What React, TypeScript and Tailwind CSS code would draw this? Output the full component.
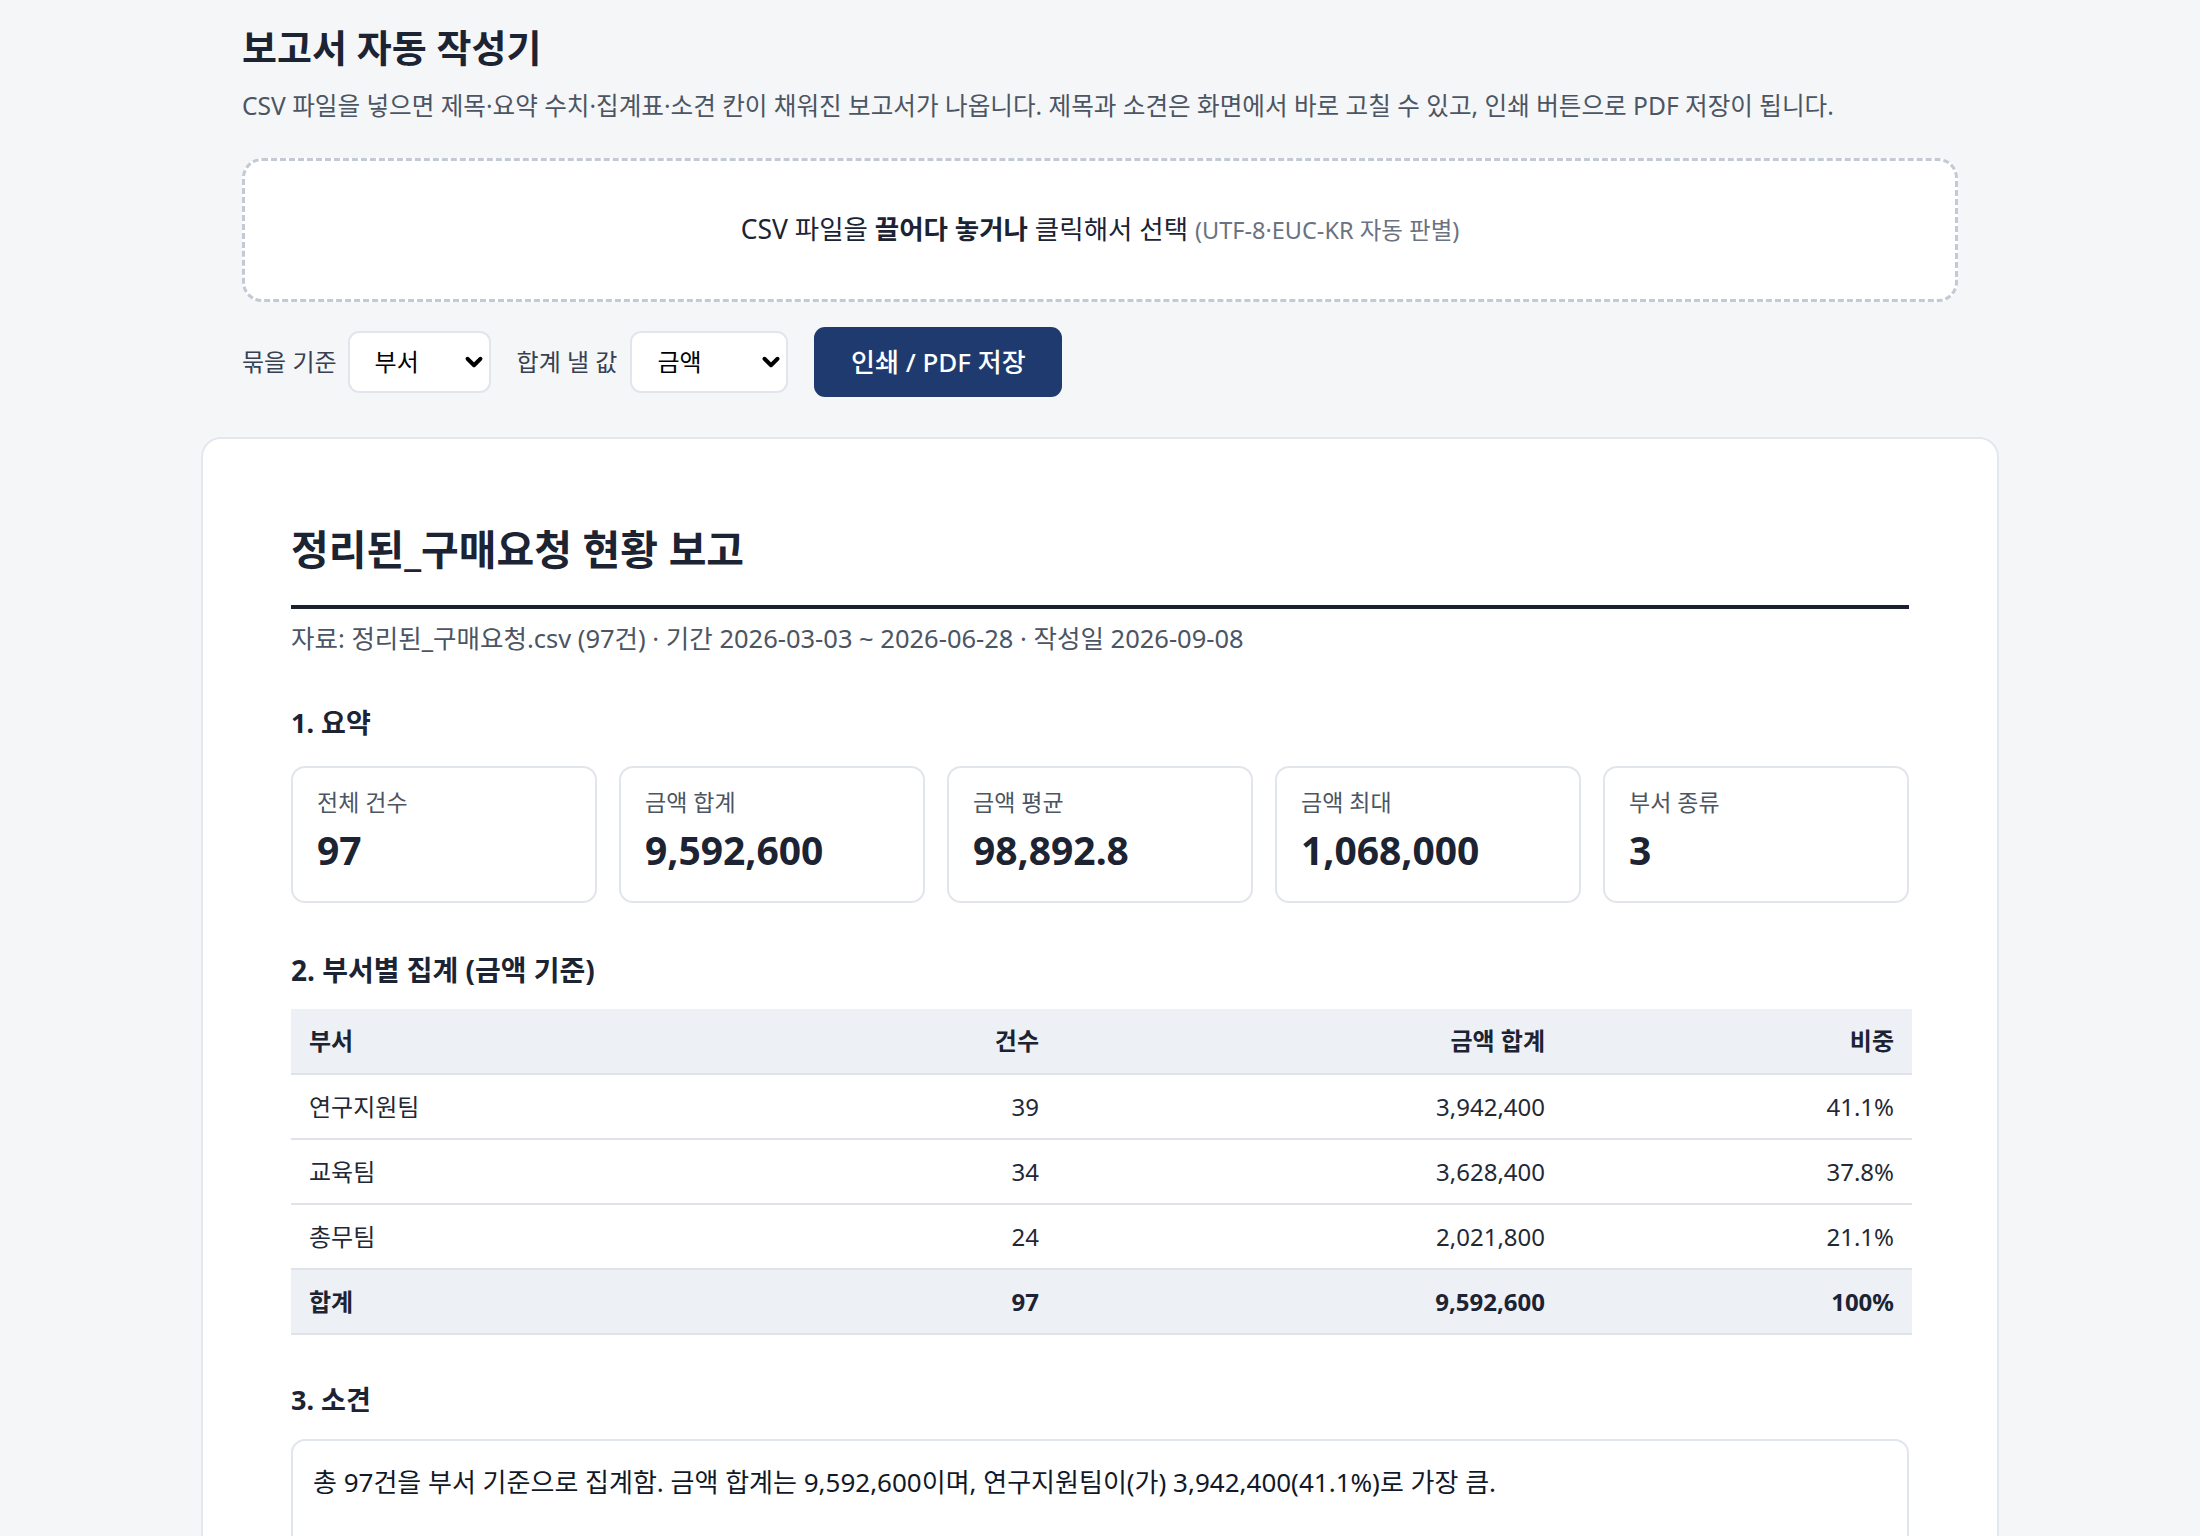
import { ChevronDown } from "lucide-react";

const rows = [
  { name: "연구지원팀", count: "39", sum: "3,942,400", share: "41.1%" },
  { name: "교육팀", count: "34", sum: "3,628,400", share: "37.8%" },
  { name: "총무팀", count: "24", sum: "2,021,800", share: "21.1%" },
];

const stats = [
  { label: "전체 건수", value: "97" },
  { label: "금액 합계", value: "9,592,600" },
  { label: "금액 평균", value: "98,892.8" },
  { label: "금액 최대", value: "1,068,000" },
  { label: "부서 종류", value: "3" },
];

function Select({ value, width }: { value: string; width: string }) {
  return (
    <div className={`relative ${width}`}>
      <select
        defaultValue={value}
        className="h-[62px] w-full appearance-none rounded-[11px] border-2 border-[#e1e5ec] bg-white pl-[25px] text-[24px] text-black outline-none"
      >
        <option>{value}</option>
      </select>
      <ChevronDown
        size={26}
        strokeWidth={3.6}
        className="pointer-events-none absolute right-[4px] top-1/2 -translate-y-1/2 text-black"
      />
    </div>
  );
}

export default function App() {
  return (
    <div className="min-h-screen bg-[#f5f6f8] font-['Noto_Sans','Noto_Sans_CJK_KR',sans-serif] text-[#1c2333]">
      <div className="mx-auto w-[1798px] pt-[22px]">
        <header className="px-[41px]">
          <h1 className="text-[38px] font-bold leading-[50px] text-[#1c2333]">보고서 자동 작성기</h1>
          <p className="mt-[18px] text-[24.6px] leading-[32px] text-[#4b5563]">
            CSV 파일을 넣으면 제목·요약 수치·집계표·소견 칸이 채워진 보고서가 나옵니다. 제목과 소견은 화면에서 바로 고칠 수 있고, 인쇄 버튼으로 PDF 저장이 됩니다.
          </p>

          <div className="mt-[36px] flex h-[144px] items-center justify-center rounded-[20px] border-[3px] border-dashed border-[#c3cad5] bg-white">
            <p className="text-[26.5px] text-[#1c2333]">
              CSV 파일을 <b className="font-bold">끌어다 놓거나</b> 클릭해서 선택{" "}
              <span className="text-[23.5px] text-[#6b7280]">(UTF-8·EUC-KR 자동 판별)</span>
            </p>
          </div>

          <div className="mt-[25px] flex items-center gap-[26px]">
            <label className="flex items-center gap-[11px] text-[24px] text-[#374151]">
              묶을 기준
              <Select value="부서" width="w-[143px]" />
            </label>
            <label className="flex items-center gap-[13px] text-[24px] text-[#374151]">
              합계 낼 값
              <Select value="금액" width="w-[158px]" />
            </label>
            <button className="h-[70px] w-[248px] rounded-[11px] bg-[#1e3a6e] text-[26px] font-medium text-white">
              인쇄 / PDF 저장
            </button>
          </div>
        </header>

        <main className="mt-[40px] rounded-[20px] border-2 border-[#e3e7ee] bg-white px-[88px] pb-[80px] pt-[84px]">
          <h2 className="border-b-4 border-[#1a2030] pb-[30px] text-[41px] font-bold leading-[52px] text-[#1c2333]">
            정리된_구매요청 현황 보고
          </h2>
          <p className="mt-[13px] text-[25.5px] leading-[32px] text-[#4b5563]">
            자료: 정리된_구매요청.csv (97건) · 기간 2026-03-03 ~ 2026-06-28 · 작성일 2026-09-08
          </p>

          <h3 className="mt-[51px] text-[27px] font-bold leading-[36px]">1. 요약</h3>
          <div className="mt-[25px] grid grid-cols-5 gap-[22px]">
            {stats.map((s) => (
              <div key={s.label} className="h-[137px] rounded-[14px] border-2 border-[#e1e5ec] px-[24px] pt-[20px]">
                <div className="text-[23px] leading-[28px] text-[#4b5563]">{s.label}</div>
                <div className="mt-[10px] text-[39px] font-bold leading-[48px] text-[#1c2333]">{s.value}</div>
              </div>
            ))}
          </div>

          <h3 className="mt-[49px] text-[28px] font-bold leading-[36px]">2. 부서별 집계 (금액 기준)</h3>
          <table className="mt-[21px] w-full table-fixed border-collapse text-[24px]">
            <colgroup>
              <col className="w-[383px]" />
              <col className="w-[383px]" />
              <col className="w-[506px]" />
              <col className="w-[349px]" />
            </colgroup>
            <thead>
              <tr className="h-[65px] border-b-2 border-[#dfe3e9] bg-[#edf0f5] font-bold">
                <th className="px-[18px] text-left">부서</th>
                <th className="px-[18px] text-right">건수</th>
                <th className="px-[18px] text-right">금액 합계</th>
                <th className="px-[18px] text-right">비중</th>
              </tr>
            </thead>
            <tbody>
              {rows.map((r) => (
                <tr key={r.name} className="h-[65px] border-b-2 border-[#dfe3e9] text-[#1f2937]">
                  <td className="px-[18px]">{r.name}</td>
                  <td className="px-[18px] text-right">{r.count}</td>
                  <td className="px-[18px] text-right">{r.sum}</td>
                  <td className="px-[18px] text-right">{r.share}</td>
                </tr>
              ))}
              <tr className="h-[65px] border-b-2 border-[#dfe3e9] bg-[#edf0f5] font-bold">
                <td className="px-[18px]">합계</td>
                <td className="px-[18px] text-right">97</td>
                <td className="px-[18px] text-right">9,592,600</td>
                <td className="px-[18px] text-right">100%</td>
              </tr>
            </tbody>
          </table>

          <h3 className="mt-[47px] text-[27px] font-bold leading-[36px]">3. 소견</h3>
          <div className="mt-[21px] h-[200px] rounded-[14px] border-2 border-[#e1e5ec] px-[20px] pt-[24px] text-[26px] leading-[34px] text-[#111827]">
            총 97건을 부서 기준으로 집계함. 금액 합계는 9,592,600이며, 연구지원팀이(가) 3,942,400(41.1%)로 가장 큼.
          </div>
        </main>
      </div>
    </div>
  );
}
